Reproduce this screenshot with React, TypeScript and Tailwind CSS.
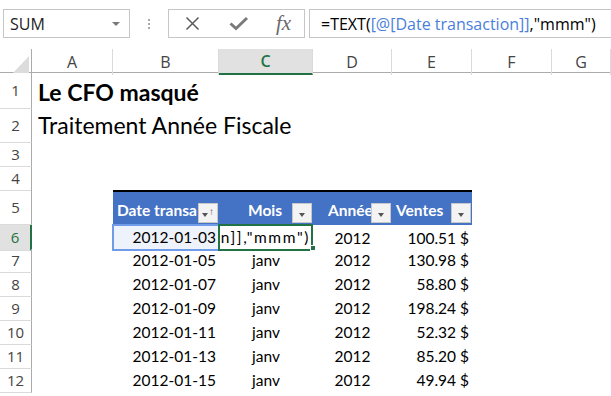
import { clsx } from 'clsx'

// ─── Column geometry (row header + A..G) ─────────────────────────────────────
const GRID = 'grid grid-cols-[32px_81px_106px_94px_79px_80px_80px_1fr]'
const COLS = ['A', 'B', 'C', 'D', 'E', 'F', 'G']

const rows = [
  { n: 7, date: '2012-01-05', amount: '130.98 $' },
  { n: 8, date: '2012-01-07', amount: '58.80 $' },
  { n: 9, date: '2012-01-09', amount: '198.24 $' },
  { n: 10, date: '2012-01-11', amount: '52.32 $' },
  { n: 11, date: '2012-01-13', amount: '85.20 $' },
  { n: 12, date: '2012-01-15', amount: '49.94 $' },
]

function RowNum({ n, active }: { n: number; active?: boolean }) {
  return (
    <div
      className={clsx(
        'flex items-center justify-center border-b border-[#dadada] font-["Open_Sans",sans-serif] text-[15px]',
        active
          ? 'bg-[#e1e1e1] text-[#217346] border-r-2 border-r-[#217346]'
          : 'text-[#444] border-r border-r-[#ababab]'
      )}
    >
      {n}
    </div>
  )
}

function FilterButton({ sorted }: { sorted?: boolean }) {
  return (
    <div className="absolute right-[1px] bottom-[2px] flex h-[20px] w-[20px] items-end justify-center gap-[1px] border border-[#c8c8c8] bg-[#f3f3f3] pb-[5px]">
      <span className="block h-0 w-0 border-x-[3.5px] border-t-[4px] border-x-transparent border-t-[#555]" />
      {sorted && <span className="-mt-[12px] text-[10px] leading-none text-[#555] font-['Liberation_Sans',sans-serif]">↑</span>}
    </div>
  )
}

export default function App() {
  return (
    <div className="h-[396px] w-[611px] overflow-hidden bg-white font-['Lato',sans-serif] text-black">
      {/* Top bar: name box + formula bar */}
      <div className="flex h-[49px] items-start pt-[9px]">
        <div className="ml-[3px] flex h-[29px] w-[127px] items-center justify-between border border-[#c6c6c6] pl-[6px] pr-[6px] font-['Open_Sans',sans-serif] text-[16px] text-[#222]">
          <span>SUM</span>
          <span className="mr-[3px] block h-0 w-0 border-x-[4px] border-t-[4px] border-x-transparent border-t-[#7a7a7a]" />
        </div>
        <div className="flex h-[29px] w-[38px] flex-col items-center justify-center gap-[2px]">
          <span className="block h-[2px] w-[2px] bg-[#aaa]" />
          <span className="block h-[2px] w-[2px] bg-[#aaa]" />
          <span className="block h-[2px] w-[2px] bg-[#aaa]" />
        </div>
        <div className="flex h-[29px] w-[137px] items-center border border-[#c6c6c6]">
          <div className="flex w-[46px] justify-center">
            <svg width="15" height="15" viewBox="0 0 15 15">
              <path d="M1.5 1.5 L13.5 13.5 M13.5 1.5 L1.5 13.5" stroke="#5a5a5a" strokeWidth="1.5" />
            </svg>
          </div>
          <div className="flex w-[48px] justify-center">
            <svg width="20" height="15" viewBox="0 0 20 15">
              <path d="M1.5 7.5 L7 12.5 L18 2" stroke="#7a7a7a" strokeWidth="3" fill="none" />
            </svg>
          </div>
          <div className="flex flex-1 justify-center font-['Liberation_Serif',serif] text-[21px] italic leading-none text-[#6a6a6a]">
            fx
          </div>
        </div>
        <div className="ml-[4px] flex h-[29px] flex-1 items-center border border-r-0 border-[#c6c6c6] pl-[11px] font-['Open_Sans',sans-serif] text-[16px] whitespace-nowrap">
          <span>=TEXT(</span>
          <span className="text-[#4a7fdc]">[@[Date transaction]]</span>
          <span>,"mmm")</span>
        </div>
      </div>

      {/* Column headers */}
      <div className={clsx(GRID, 'h-[24px] border-b border-[#ababab]')}>
        <div className="relative border-r border-[#ababab]">
          <span className="absolute bottom-[2px] right-[2px] block h-0 w-0 border-b-[17px] border-l-[16px] border-b-[#dcdcdc] border-l-transparent" />
        </div>
        {COLS.map((c) => (
          <div
            key={c}
            className={clsx(
              'flex items-center justify-center border-r border-[#dadada] font-["Open_Sans",sans-serif] text-[16px]',
              c === 'C'
                ? 'bg-[#e1e1e1] border-b-2 border-b-[#217346] text-[#217346] font-semibold'
                : 'text-[#444]'
            )}
          >
            {c}
          </div>
        ))}
      </div>

      {/* Row 1 */}
      <div className={clsx(GRID, 'h-[36px]')}>
        <RowNum n={1} />
        <div className="col-span-7 flex items-end whitespace-nowrap pb-[5px] pl-[6px] text-[23px] font-bold leading-none">
          Le CFO masqué
        </div>
      </div>
      {/* Row 2 */}
      <div className={clsx(GRID, 'h-[34px]')}>
        <RowNum n={2} />
        <div className="col-span-7 flex items-end whitespace-nowrap pb-[6px] pl-[6px] text-[23px] leading-none">
          Traitement Année Fiscale
        </div>
      </div>
      {/* Rows 3-4 */}
      <div className={clsx(GRID, 'h-[24px]')}>
        <RowNum n={3} />
      </div>
      <div className={clsx(GRID, 'h-[23px]')}>
        <RowNum n={4} />
      </div>

      {/* Row 5: table header */}
      <div className={clsx(GRID, 'h-[35px]')}>
        <RowNum n={5} />
        <div />
        <div className="col-span-4 grid grid-cols-[106px_94px_79px_80px] border-t-2 border-black bg-[#4472c4] text-[15.5px] font-bold text-white">
          <div className="relative flex items-end overflow-hidden whitespace-nowrap pb-[3px] pl-[4px]">
            <span className="block w-[80px] overflow-hidden">Date transaction</span>
            <FilterButton sorted />
          </div>
          <div className="relative flex items-end justify-center overflow-hidden whitespace-nowrap pb-[3px] pr-[2px]">
            Mois
            <FilterButton />
          </div>
          <div className="relative flex items-end overflow-hidden whitespace-nowrap pb-[3px] pl-[15px]">
            <span className="block w-[44px] overflow-hidden">Année</span>
            <FilterButton />
          </div>
          <div className="relative flex items-end overflow-hidden whitespace-nowrap pb-[3px] pl-[4px]">
            Ventes
            <FilterButton />
          </div>
        </div>
      </div>

      {/* Row 6: editing row */}
      <div className={clsx(GRID, 'h-[24px] text-[15.5px]')}>
        <RowNum n={6} active />
        <div />
        <div className="-ml-[1px] -mt-[1px] flex items-center justify-end border-2 border-r-0 border-[#6f9be8] bg-[#eef2fb] pr-[3px]">
          2012-01-03
        </div>
        <div className="relative -mt-[1px] -ml-[1px] flex items-center justify-end overflow-hidden border-2 border-[#217346] pr-[1px] whitespace-nowrap">
          <span className="tracking-[1.6px]">ion]],"mmm")</span>
        </div>
        <div className="flex items-center justify-center">2012</div>
        <div className="flex items-center justify-end pr-[3px]">100.51 $</div>
        <div />
        <div />
      </div>
      <div className="relative h-0">
        <span className="absolute left-[310px] -top-[4px] block h-[6px] w-[6px] border border-white bg-[#217346]" />
      </div>

      {/* Rows 7-12 */}
      {rows.map((r) => (
        <div key={r.n} className={clsx(GRID, 'h-[24px] text-[15.5px]')}>
          <RowNum n={r.n} />
          <div />
          <div className="flex items-center justify-end pr-[3px]">{r.date}</div>
          <div className="flex items-center justify-center">janv</div>
          <div className="flex items-center justify-center">2012</div>
          <div className="flex items-center justify-end pr-[3px]">{r.amount}</div>
          <div />
          <div />
        </div>
      ))}
    </div>
  )
}
